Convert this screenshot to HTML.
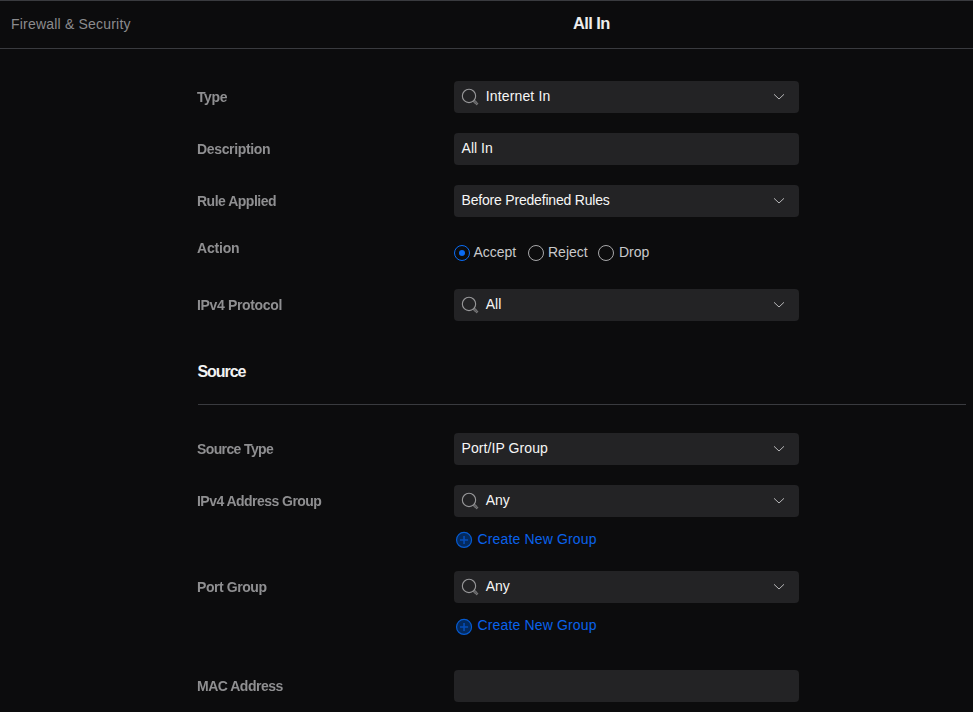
<!DOCTYPE html>
<html>
<head>
<meta charset="utf-8">
<title>All In</title>
<style>
*{box-sizing:border-box;margin:0;padding:0}
html,body{width:973px;height:712px;overflow:hidden;background:#0c0c0d;}
body{font-family:"Liberation Sans",sans-serif;color:#e6e6e6;position:relative;-webkit-font-smoothing:antialiased}
.topline{position:absolute;left:0;top:0;width:973px;height:1px;background:#3a3b3f}
.hdrline{position:absolute;left:0;top:48px;width:973px;height:1px;background:#3a3b3f}
.crumb{position:absolute;left:11px;top:15px;font-size:14px;line-height:18px;color:#8b8b8d;white-space:nowrap;letter-spacing:.2px}
.title{position:absolute;left:491.3px;width:200px;text-align:center;top:14px;font-size:16.5px;line-height:18px;font-weight:bold;color:#ededed;white-space:nowrap;letter-spacing:-.6px}
.lbl{position:absolute;left:197.1px;font-size:14px;line-height:18px;font-weight:bold;color:#8f8f91;white-space:nowrap;letter-spacing:-0.5px;will-change:transform}
.inp{position:absolute;left:454px;width:345px;height:32px;background:#232325;border-radius:4px}
.inp .txt{position:absolute;left:7.6px;top:6px;font-size:14px;line-height:18px;color:#f6f6f6;white-space:nowrap}
.inp.s .txt{left:31.7px}
.inp svg.mag{position:absolute;left:7px;top:7px;width:18px;height:18px;overflow:visible}
.inp svg.chev{position:absolute;left:319px;top:12px;width:12px;height:8px}
.h2{position:absolute;left:197.5px;top:363px;font-size:16px;line-height:18px;font-weight:bold;color:#f2f2f2;letter-spacing:-1.05px}
.hr{position:absolute;left:198px;top:404px;width:768px;height:1px;background:#3a3b3f}
.radio{position:absolute;top:245px;width:16px;height:16px;border-radius:50%;border:1.5px solid #a8a8aa}
.radio.on{border-color:#0a6cf5}
.radio.on:after{content:"";position:absolute;left:3.5px;top:3.5px;width:6px;height:6px;border-radius:50%;background:#0a6cf5}
.rtxt{position:absolute;top:243px;font-size:14px;line-height:18px;color:#c9c9cb;white-space:nowrap}
.link{position:absolute;left:477.5px;font-size:14px;line-height:18px;color:#0a62ea;white-space:nowrap;letter-spacing:.15px}
svg.plus{position:absolute;left:455px;width:18px;height:18px}
</style>
</head>
<body>
<div class="topline"></div>
<div class="crumb">Firewall &amp; Security</div>
<div class="title">All In</div>
<div class="hdrline"></div>

<div class="lbl" style="top:88px;letter-spacing:-0.4px">Type</div>
<div class="inp s" style="top:81px"><svg class="mag" viewBox="0 0 18 18"><circle cx="8" cy="7.95" r="6.65" fill="none" stroke="#98989a" stroke-width="1.1"/><rect x="6.9" y="-1.05" width="4.9" height="2.1" rx="1.05" transform="translate(8 7.95) rotate(45)" fill="#5c5c5e" stroke="#98989a" stroke-width=".7"/></svg><span class="txt" style="letter-spacing:.15px">Internet In</span><svg class="chev" viewBox="0 0 12 8"><path d="M1 1.3 L6 6 L11 1.3" fill="none" stroke="#b6b6b8" stroke-width="1"/></svg></div>

<div class="lbl" style="top:140px;letter-spacing:-0.35px">Description</div>
<div class="inp" style="top:133px"><span class="txt">All In</span></div>

<div class="lbl" style="top:192px;letter-spacing:-0.5px">Rule Applied</div>
<div class="inp" style="top:185px"><span class="txt" style="letter-spacing:-.2px">Before Predefined Rules</span><svg class="chev" viewBox="0 0 12 8"><path d="M1 1.3 L6 6 L11 1.3" fill="none" stroke="#b6b6b8" stroke-width="1"/></svg></div>

<div class="lbl" style="top:239px;letter-spacing:-0.2px">Action</div>
<div class="radio on" style="left:454px"></div><div class="rtxt" style="left:473.4px">Accept</div>
<div class="radio" style="left:528px"></div><div class="rtxt" style="left:548px">Reject</div>
<div class="radio" style="left:598px"></div><div class="rtxt" style="left:619px">Drop</div>

<div class="lbl" style="top:296px;letter-spacing:-0.35px">IPv4 Protocol</div>
<div class="inp s" style="top:289px"><svg class="mag" viewBox="0 0 18 18"><circle cx="8" cy="7.95" r="6.65" fill="none" stroke="#98989a" stroke-width="1.1"/><rect x="6.9" y="-1.05" width="4.9" height="2.1" rx="1.05" transform="translate(8 7.95) rotate(45)" fill="#5c5c5e" stroke="#98989a" stroke-width=".7"/></svg><span class="txt">All</span><svg class="chev" viewBox="0 0 12 8"><path d="M1 1.3 L6 6 L11 1.3" fill="none" stroke="#b6b6b8" stroke-width="1"/></svg></div>

<div class="h2">Source</div>
<div class="hr"></div>

<div class="lbl" style="top:440px;letter-spacing:-0.62px">Source Type</div>
<div class="inp" style="top:433px"><span class="txt" style="letter-spacing:.07px">Port/IP Group</span><svg class="chev" viewBox="0 0 12 8"><path d="M1 1.3 L6 6 L11 1.3" fill="none" stroke="#b6b6b8" stroke-width="1"/></svg></div>

<div class="lbl" style="top:492px;letter-spacing:-0.54px">IPv4 Address Group</div>
<div class="inp s" style="top:485px"><svg class="mag" viewBox="0 0 18 18"><circle cx="8" cy="7.95" r="6.65" fill="none" stroke="#98989a" stroke-width="1.1"/><rect x="6.9" y="-1.05" width="4.9" height="2.1" rx="1.05" transform="translate(8 7.95) rotate(45)" fill="#5c5c5e" stroke="#98989a" stroke-width=".7"/></svg><span class="txt">Any</span><svg class="chev" viewBox="0 0 12 8"><path d="M1 1.3 L6 6 L11 1.3" fill="none" stroke="#b6b6b8" stroke-width="1"/></svg></div>
<svg class="plus" style="top:531px" viewBox="0 0 18 18"><circle cx="9.05" cy="8.95" r="7.5" fill="#042a5e" stroke="#065bd0" stroke-width="1.2"/><path d="M9.05 4.9 V13 M5 8.95 H13.1" stroke="#054db8" stroke-width="1.6"/></svg>
<div class="link" style="top:530px">Create New Group</div>

<div class="lbl" style="top:578px;letter-spacing:-0.43px">Port Group</div>
<div class="inp s" style="top:571px"><svg class="mag" viewBox="0 0 18 18"><circle cx="8" cy="7.95" r="6.65" fill="none" stroke="#98989a" stroke-width="1.1"/><rect x="6.9" y="-1.05" width="4.9" height="2.1" rx="1.05" transform="translate(8 7.95) rotate(45)" fill="#5c5c5e" stroke="#98989a" stroke-width=".7"/></svg><span class="txt">Any</span><svg class="chev" viewBox="0 0 12 8"><path d="M1 1.3 L6 6 L11 1.3" fill="none" stroke="#b6b6b8" stroke-width="1"/></svg></div>
<svg class="plus" style="top:618px" viewBox="0 0 18 18"><circle cx="9.05" cy="8.95" r="7.5" fill="#042a5e" stroke="#065bd0" stroke-width="1.2"/><path d="M9.05 4.9 V13 M5 8.95 H13.1" stroke="#054db8" stroke-width="1.6"/></svg>
<div class="link" style="top:616px">Create New Group</div>

<div class="lbl" style="top:677px;letter-spacing:-0.5px">MAC Address</div>
<div class="inp" style="top:670px"></div>
</body>
</html>
